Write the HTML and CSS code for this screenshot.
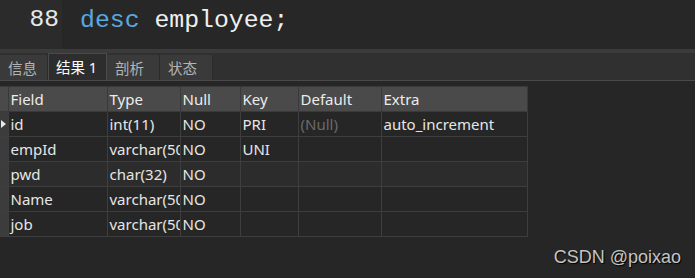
FILE: index.html
```html
<!DOCTYPE html>
<html lang="zh">
<head>
  <meta charset="UTF-8">
  <title>desc employee</title>
  <link rel="stylesheet" href="styles.css">
</head>
<body>
  <div class="editor">
    <div class="gutter">88</div>
    <div class="code"><span class="kw">desc</span> employee;</div>
  </div>
  <div class="split"></div>
  <div class="tabs">
    <div class="tab">信息</div>
    <div class="tab active">结果 1</div>
    <div class="tab">剖析</div>
    <div class="tab">状态</div>
  </div>
  <div class="result">
    <table class="grid">
      <tr class="head">
        <td class="mark"></td>
        <td class="c1">Field</td>
        <td class="c2">Type</td>
        <td class="c3">Null</td>
        <td class="c4">Key</td>
        <td class="c5">Default</td>
        <td class="c6">Extra</td>
      </tr>
      <tr>
        <td class="mark"><span class="arrow"></span></td>
        <td>id</td><td>int(11)</td><td>NO</td><td>PRI</td><td class="null">(Null)</td><td>auto_increment</td>
      </tr>
      <tr>
        <td class="mark"></td>
        <td>empId</td><td>varchar(50)</td><td>NO</td><td>UNI</td><td></td><td></td>
      </tr>
      <tr class="hover">
        <td class="mark"></td>
        <td>pwd</td><td>char(32)</td><td>NO</td><td></td><td></td><td></td>
      </tr>
      <tr>
        <td class="mark"></td>
        <td>Name</td><td>varchar(50)</td><td>NO</td><td></td><td></td><td></td>
      </tr>
      <tr>
        <td class="mark"></td>
        <td>job</td><td>varchar(50)</td><td>NO</td><td></td><td></td><td></td>
      </tr>
    </table>
    <div class="watermark">CSDN @poixao</div>
  </div>
</body>
</html>
```

FILE: styles.css
```css
* {
  margin: 0;
  padding: 0;
  box-sizing: border-box;
}
body {
  width: 695px;
  height: 278px;
  overflow: hidden;
  background: #262626;
  font-family: "Noto Sans", "Noto Sans CJK SC", sans-serif;
}
.editor {
  height: 49px;
  display: flex;
  background: #272727;
}
.gutter {
  width: 62px;
  padding-right: 3px;
  background: #2b2b2b;
  color: #e8e8e8;
  text-align: right;
  font-family: "Liberation Mono", monospace;
  font-size: 24.5px;
  line-height: 40px;
}
.code {
  padding-left: 18px;
  color: #f0f0f0;
  font-family: "Liberation Mono", monospace;
  font-size: 24.8px;
  line-height: 40px;
}
.kw {
  color: #5aa8e0;
}
.split {
  height: 4px;
  background: #3b3b3b;
}
.tabs {
  height: 28px;
  display: flex;
  align-items: flex-end;
  background: #303030;
  border-bottom: 1px solid #4a4a4a;
}
.tab {
  height: 25px;
  padding: 0 0 0 8px;
  background: #3a3a3a;
  border-right: 1px solid #2c2c2c;
  color: #b4b4b4;
  font-size: 14.5px;
  line-height: 26px;
  white-space: nowrap;
}
.tab:nth-child(1) { width: 48px; }
.tab:nth-child(2) { width: 59px; }
.tab:nth-child(3) { width: 53px; }
.tab:nth-child(4) { width: 53px; }
.tab.active {
  height: 27px;
  padding-left: 7px;
  background: #2d2d2d;
  border: 1px solid #4a4a4a;
  border-bottom: none;
  color: #ffffff;
}
.result {
  position: relative;
  height: 196px;
  padding-top: 5px;
}
.grid {
  border-collapse: collapse;
  table-layout: fixed;
  width: 527px;
  color: #e6e6e6;
  font-size: 15px;
}
.grid td {
  height: 25px;
  padding: 0 0 0 2px;
  border: 1px solid #3e3e3e;
  white-space: nowrap;
  overflow: hidden;
  line-height: 23px;
}
.grid .head td {
  background: #4a4a4a;
  border-color: #3a3a3a;
  color: #ececec;
}
.grid .mark {
  width: 8px;
  padding: 0;
  background: #3c3c3c;
  border-left: none;
  position: relative;
}
.grid .c1 { width: 99px; }
.grid .c2 { width: 73px; }
.grid .c3 { width: 60px; }
.grid .c4 { width: 58px; }
.grid .c5 { width: 83px; }
.grid .c6 { width: 146px; }
.grid .hover td {
  background: #2c2c2c;
}
.grid .hover .mark {
  background: #3c3c3c;
}
.grid .null {
  color: #6a6a6a;
}
.arrow {
  position: absolute;
  left: 1px;
  top: 8px;
  border-top: 4px solid transparent;
  border-bottom: 4px solid transparent;
  border-left: 5px solid #e8e8e8;
}
.watermark {
  position: absolute;
  right: 14px;
  bottom: 9px;
  color: #c4c4c4;
  font-family: "Liberation Sans", Arial, sans-serif;
  font-size: 18px;
  text-shadow: 1px 1px 1px #000;
}
```
